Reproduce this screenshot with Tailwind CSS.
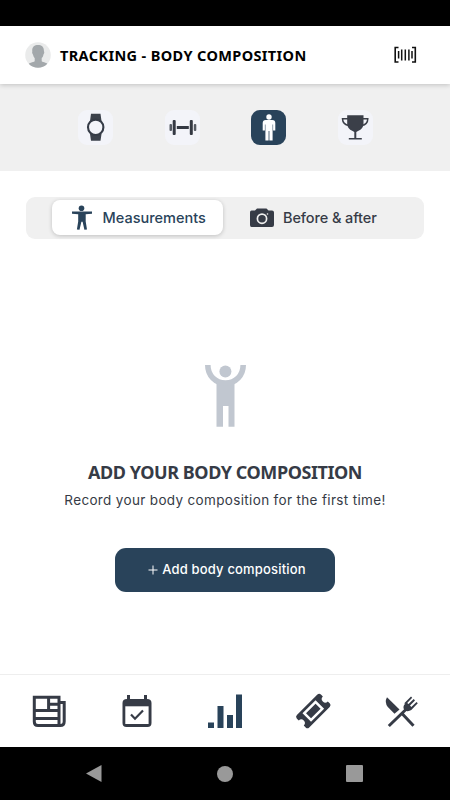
<!DOCTYPE html>
<html lang="en">
<head>
<meta charset="utf-8">
<title>Tracking - Body composition</title>
<script src="https://cdn.jsdelivr.net/npm/@tailwindcss/browser@4"></script>
</head>
<body class="w-[450px] h-[800px] overflow-hidden bg-white flex flex-col font-['Inter',sans-serif] text-[#363b46]">
  <div class="h-[26px] shrink-0 bg-black"></div>
  <header class="h-[57.5px] shrink-0 bg-white flex items-center pl-[25px] pr-[33px] relative shadow-[0_1px_5px_rgba(0,0,0,0.2)]">
    <svg class="size-[26px] mt-[1px] shrink-0" viewBox="0 0 26 26">
      <clipPath id="avatar"><circle cx="13" cy="13" r="12.8"/></clipPath>
      <g clip-path="url(#avatar)"><rect width="26" height="26" fill="#eaebeb"/>
      <path d="M7.200 8.500C7.200 4.800 9.500 3 13 3s5.900 1.800 5.900 5.500c0 1 .6 1.500 .3 2.600-.2 1-.7 1.200-.9 2.100-.3 1.500-.9 2-1.600 2.700v3.300c1.500 1.200 5.800 1.300 6.500 3.800V26H3v-3c.8-2.500 5-2.600 6.700-3.800v-3.300c-.8-.7-1.300-1.400-1.500-2.700-.3-.9-.8-1.100-1-2.100-.2-1 .3-1.600 0-2.600Z" fill="#a3a8ab"/></g>
    </svg>
    <h1 class="ml-[9px] w-[247px] whitespace-nowrap font-['Noto_Sans',sans-serif] font-bold text-[14.500px] leading-5 tracking-[0.370px] text-black">TRACKING - BODY COMPOSITION</h1>
    <svg class="ml-auto w-[24px] h-[18px]" viewBox="0 0 24 18" fill="none" stroke="#111" stroke-width="1.600">
      <path d="M5.500 1.500H2.200v14.500h3.300M19 1.500h3.300v14.500H19"/><path d="M5.600 5v7.500M8.700 3.500v11M12.300 3.500v11M15.900 3.500v11M19 5v7.500" stroke-width="1.500"/>
    </svg>
  </header>
  <nav class="h-[87.5px] shrink-0 bg-[#f0f0f0] flex justify-between items-center pl-[78px] pr-[77px]">
    <div class="size-[35px] rounded-[9px] bg-[#f3f4f9]"><svg viewBox="78 110 35 35">
      <path d="M91 113.800h9.500l1 7.200h-11.500zM90 134h11.500l-1 6.700H91z" fill="#3c424c"/><circle cx="95.700" cy="127.300" r="7.700" fill="#f3f4f9" stroke="#363c47" stroke-width="2.100"/></svg></div>
    <div class="size-[35px] rounded-[9px] bg-[#f3f4f9]"><svg viewBox="164.500 110 35 35" fill="#343943">
      <rect x="172.200" y="120" width="3" height="15" rx="1"/><rect x="189.300" y="120" width="3" height="15" rx="1"/><rect x="176.300" y="126" width="12" height="3"/><rect x="169" y="124" width="2.500" height="7" rx="1" fill="#565b64"/><rect x="193.300" y="124" width="2.500" height="7" rx="1" fill="#565b64"/></svg></div>
    <div class="size-[35px] rounded-[9px] bg-[#29435a]"><svg viewBox="251 110 35 35" fill="white">
      <circle cx="269" cy="117" r="2.700"/><path d="M265.700 120h6.600q3 0 3 3v7.500h-2.200v-6h-.5v16h-3.200v-9.500h-.8v9.500h-3.200v-16h-.5v6h-2.200V123q0-3 3-3Z"/></svg></div>
    <div class="size-[35px] rounded-[9px] bg-[#f3f4f9]"><svg viewBox="338 110 35 35" fill="#3b3f49">
      <path d="M347.200 115.300h16.300v8.700q0 4.500-5.500 7l-1.700 1v6h5.500v1.500h-13v-1.500h5.500v-6l-1.700-1q-5.400-2.500-5.400-7Z"/><path d="M348 118.700h-5.500q.2 5.800 6.500 6.800M363 118.700h4.800q-.1 5.800-6 6.800" fill="none" stroke="#3b3f49" stroke-width="1.500"/></svg></div>
  </nav>
  <main class="flex-1 min-h-0 flex flex-col items-center pt-[26px]">
    <div class="w-[398px] h-[41.500px] rounded-[9px] bg-[#f0f0f0] flex items-center pl-[26px] text-[14.500px] font-medium">
      <button class="w-[171px] h-[35px] rounded-[8px] bg-white shadow-[0_1px_4px_rgba(0,0,0,0.2)] flex items-center pl-[19px] text-[#29435a] font-medium whitespace-nowrap">
        <svg class="w-[22px] h-[26px] mr-[9.500px] shrink-0" viewBox="71 205 22 26" fill="#29435a"><circle cx="81.500" cy="208.200" r="2.800"/><path d="M72 211.600h20v2.200l-6.300.5v7.200l1.300 8-2.600.3-1.800-8h-1.200l-1.900 8-2.600-.3 1.300-8v-7.200l-6.200-.5Z"/></svg>
        <span>Measurements</span>
      </button>
      <button class="ml-[26px] flex items-center whitespace-nowrap">
        <svg class="w-[25px] h-[20px] mr-[9px] shrink-0" viewBox="249 208 25 20"><path d="M251.500 210.500h3.500l2-2h9.500l2 2h3.500q2 0 2 2v12.500q0 2-2 2h-20.500q-1.500 0-1.500-2V212.500q0-2 1.500-2Z" fill="#363b46"/><circle cx="262" cy="218.700" r="4.600" fill="none" stroke="#f0f0f0" stroke-width="1.700"/><circle cx="267.500" cy="214" r=".8" fill="#f0f0f0"/></svg>
        <span class="tracking-[-0.100px]">Before &amp; after</span>
      </button>
    </div>
    <svg class="w-[44px] h-[64px] mt-[125.500px]" viewBox="203 364 44 64">
      <g fill="#c1c7d0"><circle cx="225.400" cy="371.400" r="6"/><path d="M216.500 383h18v43.700h-6v-20.700h-5.500v20.700h-6.500Z"/></g><path d="M207.800 365c0 10.500 7.500 18 17.700 18s17.700-7.500 17.700-18" fill="none" stroke="#c1c7d0" stroke-width="5.600"/></svg>
    <h2 class="mt-[32px] h-6 leading-6 text-[18px] font-bold font-['Noto_Sans',sans-serif] whitespace-nowrap tracking-[-0.430px] text-[#363b46]">ADD YOUR BODY COMPOSITION</h2>
    <p class="mt-[6px] leading-5 text-[13.500px] whitespace-nowrap tracking-[0.340px]">Record your body composition for the first time!</p>
    <button class="mt-[38px] w-[220px] h-[43.500px] rounded-[11px] bg-[#29435a] text-white text-[13px] font-medium flex items-center justify-center gap-[4px] pl-[4px] whitespace-nowrap"><svg class="size-[10px]" viewBox="0 0 10 10" stroke="white" stroke-width="1"><path d="M5 .5v9M.5 5h9"/></svg><span class="tracking-[0.170px]">Add body composition</span></button>
  </main>
  <footer class="h-[73px] shrink-0 border-t border-[#eee] flex justify-between px-[30px] items-center">
    <svg class="w-[38px] h-[38px]" viewBox="30 692 38 38" fill="none" stroke="#363b46" stroke-width="3"><path d="M34.300 697.300h24.700v28.200H38q-3.700 0-3.700-3.800Z"/><path d="M59.500 702.500h4.700v19q0 4-4 4h-2.700M48.600 697v13.500M34 710.600h25M49 704.200h10M35 718.400h23"/></svg>
    <svg class="w-[38px] h-[38px]" viewBox="118 692 38 38"><path d="M127 695h3v4h14v-4h3v4q4.500 0 4.500 4v20q0 4-4 4h-21q-4 0-4-4v-20q0-4 4.500-4Z" fill="#363b46"/><path d="M125.300 706.300h23.300v17.700h-23.300z" fill="white"/><path d="m131 714.500 4 4.200 8-8.200" fill="none" stroke="#363b46" stroke-width="2.200"/></svg>
    <svg class="w-[38px] h-[38px]" viewBox="206 692 38 38" fill="#29435a"><path d="M208 722.500h6v5.500h-6zM217.500 706h6v22h-6zM227 715h6v13h-6zM236 694.500h6V728h-6z"/></svg>
    <svg class="w-[38px] h-[38px]" viewBox="294 692 38 38"><g transform="translate(313.300 711) rotate(-45)"><path d="M-14.500-8.700h29q2.500 0 2.500 2.500v2.700a3.500 3.500 0 0 0 0 7V6.200q0 2.500-2.500 2.500h-29Q-17 8.700-17 6.200V3.500a3.500 3.500 0 0 0 0-7V-6.200q0-2.500 2.500-2.500Z" fill="#363b46"/><rect x="-8" y="-4.800" width="16" height="9.600" fill="#363b46" stroke="white" stroke-width="2.500"/></g></svg>
    <svg class="w-[38px] h-[38px]" viewBox="382 692 38 38" fill="#363b46"><path d="M387 697.300 399.500 709.500l-5 4.300-6.700-6.800q-3.600-4.800-.8-9.700Z"/><path d="M388.800 726 409 706.500M401.500 713l12 12.700" stroke="#363b46" stroke-width="3"/><path d="m404 703.500 7-7 1.200 1.200-5 5.200 1.300 1.200 5.200-5 1.300 1.300-5 5.200 1.300 1.300 5.200-5 1.300 1.300-6.500 6.800q-3 2-6.500.5-3-3.300.5-7Z"/></svg>
  </footer>
  <div class="h-[53px] shrink-0 bg-black flex justify-between items-center pl-[86px] pr-[87px]">
    <svg class="w-4 h-[17px]" viewBox="0 0 16 17"><path d="M0 8.500 15.500 0v17Z" fill="#999"/></svg>
    <div class="size-4 rounded-full bg-[#999] ml-[1px]"></div>
    <div class="size-[17px] rounded-[1px] bg-[#999]"></div>
  </div>
</body>
</html>
